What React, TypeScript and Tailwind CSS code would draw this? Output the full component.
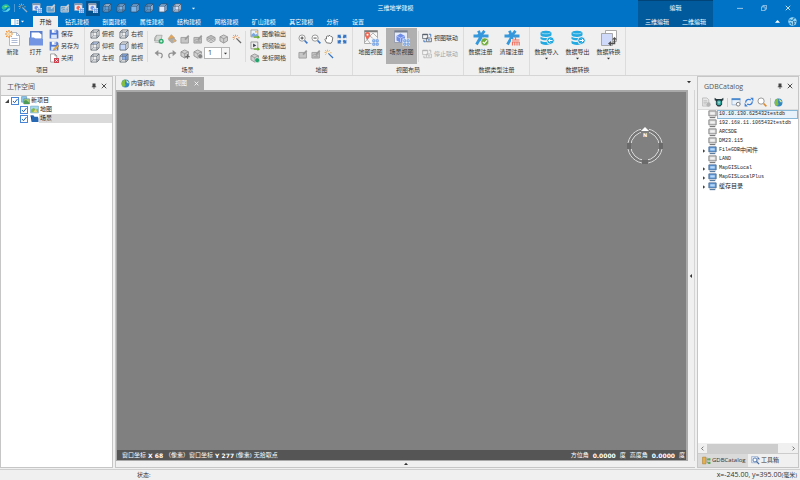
import type { ReactNode } from 'react'

type IconProps = { className?: string }

// 16x16 drawing area shared by all the icons
function Svg({ className = 'size-[10px]', children }: IconProps & { children: ReactNode }) {
    return (
        <svg viewBox="0 0 16 16" className={`shrink-0 ${className}`} fill="none" aria-hidden="true">
            {children}
        </svg>
    )
}

type Face = 'none' | 'front' | 'top' | 'side' | 'all' | 'back'

type CubeProps = IconProps & { face?: Face; stroke?: string; fill?: string; base?: string }

function Cube({ face = 'none', stroke = '#5d6670', fill = '#8ab0ee', base = 'none', className }: CubeProps) {
    return (
        <Svg className={className}>
            <path d="M1.5 5 5 1.5h9.5V11L11 14.5H1.5z" fill={base} />
            {face === 'all' && <path d="M1.5 5 5 1.5h9.5V11L11 14.5H1.5z" fill={fill} />}
            {face === 'front' && <path d="M1.5 5H11v9.5H1.5z" fill={fill} />}
            {face === 'top' && <path d="M1.5 5 5 1.5h9.5L11 5z" fill={fill} />}
            {face === 'side' && <path d="M11 5l3.5-3.5V11L11 14.5z" fill={fill} />}
            {face === 'back' && <path d="M5 1.5h9.5V11H5z" fill={fill} />}
            <path d="M1.5 5H11v9.5H1.5zM1.5 5 5 1.5h9.5L11 5M14.5 1.5V11L11 14.5" stroke={stroke} strokeWidth="1.3" />
            {face !== 'front' && face !== 'all' && <path d="M5 1.5V11h9.5M5 11l-3.5 3.5" stroke={stroke} strokeWidth="0.8" />}
        </Svg>
    )
}

function Wand({ className, gray = '#6a6a6a', spark = '#f08a3c' }: IconProps & { gray?: string; spark?: string }) {
    return (
        <Svg className={className}>
            <path d="M7 7l7.5 7.5" stroke={gray} strokeWidth="2" />
            <path d="M5.5 1v3M1 5.5h3M2 2l2 2M9 2 7.5 4M2 9l2-1.5M10 6h2" stroke={spark} strokeWidth="1.5" />
        </Svg>
    )
}

function SceneIcon({ className, badge = '#6f94ee' }: IconProps & { badge?: string }) {
    return (
        <Svg className={className}>
            <path d="M1 1h12v11H1z" fill="#eef2fb" stroke="#9aa3b5" />
            <path d="M1 1h12v2.5H1z" fill="#8d97ac" />
            <path d="M4 6l3-1.5L10 6v3.5L7 11 4 9.5z" fill={badge} />
            <path d="M8 8h8v8H8z" fill="#e8f0fb" />
            <path d="M9.5 9.5h2v2h-2zM13 9.5h2v2h-2zM9.5 13h2v2h-2zM13 13h2v2h-2z" stroke="#3f7fd6" />
        </Svg>
    )
}

function EditIcon({ className, color = '#9b9b9b', chart = false }: IconProps & { color?: string; chart?: boolean }) {
    return (
        <Svg className={className}>
            <path d="M1.5 5.5h12v9h-12z" fill={color} fillOpacity="0.5" stroke={color} strokeWidth="1.4" />
            {chart && <path d="M2 11l4-3 3 3 4-4M4 12.500h8" stroke={color} strokeWidth="1.4" />}
            <path d="M7 8l6-6.5 2 2L9 10z" fill={color} />
        </Svg>
    )
}

function ThreeDCube({ plus, ball, className }: IconProps & { plus?: boolean; ball?: string }) {
    return (
        <Svg className={className}>
            <path d="M7.5 1.5l6 3V11l-6 3.5-6-3.5V4.5z" fill="#d0d0d0" stroke="#8d8d8d" strokeWidth="1.3" />
            <path d="M1.5 4.5l6 3 6-3M7.5 7.5v7" stroke="#8d8d8d" strokeWidth="1.2" />
            {plus && <path d="M12 8.5v7M8.5 12h7" stroke="#6b6b6b" strokeWidth="2" />}
            {ball && <circle cx="11.5" cy="11.5" r="4" fill={ball} stroke="#f0f0f0" />}
        </Svg>
    )
}

function LayerIcon() {
    return (
        <Svg>
            <path d="M8 2l6.5 3.5L8 9 1.5 5.5z" fill="#b8b8b8" stroke="#888" />
            <path d="M1.5 5.5v5L8 14l6.5-3.5v-5M1.5 8 8 11.5 14.5 8" stroke="#929292" strokeWidth="1.3" />
        </Svg>
    )
}

function AddLayer() {
    return (
        <Svg>
            <path d="M4 2h9l-2 9H1z" fill="#d5d7d5" stroke="#929592" />
            <path d="M1 11V6l3-4M1 13l9 1" stroke="#929592" />
            <circle cx="11.5" cy="11.5" r="4" fill="#25a866" />
            <path d="M11.5 9.5v4M9.5 11.5h4" stroke="#fff" strokeWidth="1.2" />
        </Svg>
    )
}

function BucketIcon() {
    return (
        <Svg>
            <path d="M7 1l5 5-5 4-5-3z" fill="#e3a556" stroke="#bb9a70" />
            <path d="M2 9l9-3 4 5-7 3.5z" fill="#b0aca6" stroke="#a09c96" />
            <path d="M10 8l4 3-4 2z" fill="#e8ae66" />
        </Svg>
    )
}

function UndoIcon({ flip }: { flip?: boolean }) {
    return (
        <Svg className={flip ? 'size-[10px] -scale-x-100' : 'size-[10px]'}>
            <path d="M3 6.5h6c5 0 5.5 5 2 8" stroke="#929292" strokeWidth="2" />
            <path d="M7 1.5v10l-6-5z" fill="#929292" />
        </Svg>
    )
}

function NewIcon({ className }: IconProps) {
    return (
        <Svg className={className}>
            <path d="M4.500 2.500h7l3 3v10h-10z" fill="#fff" stroke="#a9a9a9" strokeWidth="0.8" />
            <path d="M11.5 2.5v3h3M6.5 8.5h6M6.5 10.5h6M6.5 12.500h6" stroke="#9aabc8" strokeWidth="0.8" />
            <circle cx="4" cy="4" r="1.6" fill="#ffd58f" />
            <path d="M4 0v2M4 6v2M0 4h2M6 4h2M1.2 1.2l1.3 1.3M5.5 5.500l1.3 1.3M6.8 1.2 5.5 2.5M1.2 6.8l1.3-1.3" stroke="#f08a28" strokeWidth="1.1" />
        </Svg>
    )
}

function OpenIcon({ className }: IconProps) {
    return (
        <Svg className={className}>
            <path d="M2 1h12.5v8H2z" fill="#5b7ecb" />
            <path d="M3.500 2.500h7.500l2.500 2v4h-10z" fill="#fff" />
            <path d="M1 7.500h5L7.500 9H15v6.500H1z" fill="#7294e2" />
        </Svg>
    )
}

function SaveIcon({ pen }: { pen?: boolean }) {
    return (
        <Svg>
            <path d="M1 1h12l2 2v12H1z" fill="#5279d3" />
            <path d="M4.5 1h7v5h-7z" fill="#fff" />
            <path d="M9 2h1.5v3H9z" fill="#5279d3" />
            <path d="M3.5 9h9v6h-9z" fill="#dce6fb" />
            {pen && <path d="M7 15l1-3 6-6 2 2-6 6z" fill="#e5ac4c" stroke="#9a7331" strokeWidth="0.6" />}
        </Svg>
    )
}

function CloseDocIcon() {
    return (
        <Svg>
            <path d="M2.5 1.5h7l3 3v10h-10z" fill="#fff" stroke="#777" />
            <path d="M9.5 1.5v3h3" stroke="#777" />
            <path d="M8 8h8v8H8z" fill="#cf4350" />
            <path d="M10 10l4 4M14 10l-4 4" stroke="#fff" strokeWidth="1.3" />
        </Svg>
    )
}

function ExportIcon({ video }: { video?: boolean }) {
    return (
        <Svg>
            <path d="M1.5 1.5h11v11h-11z" fill={video ? '#eee' : '#eaf2fb'} stroke="#777" />
            {video ? <path d="M5 4l5 3-5 3z" fill="#3b4450" /> : <path d="M2 12V9l4-3 3 3 3-2v5z" fill="#7ca7dd" />}
            {!video && <circle cx="9.5" cy="4.5" r="1.5" fill="#efac3c" />}
            <path d="M6 12h6V9.500l4 3.500-4 3v-2H6z" fill="#66ad27" />
        </Svg>
    )
}

function ZoomIcon({ minus, orange }: { minus?: boolean; orange?: boolean }) {
    return (
        <Svg>
            <circle cx="6.5" cy="6.5" r="5" fill="#fff" stroke="#858585" strokeWidth="1.3" />
            <path d="M10.5 10.5 15 15" stroke={orange ? '#dc8a31' : '#3975c8'} strokeWidth="2.5" />
            {!orange && <path d="M4 6.5h5" stroke="#333" strokeWidth="1.4" />}
            {!minus && !orange && <path d="M6.5 4v5" stroke="#333" strokeWidth="1.4" />}
        </Svg>
    )
}

function PanIcon() {
    return (
        <Svg>
            <path d="M4 14L1.500 9l1-1.500L4 8V4l2-1 1 1 1-2 2 1 1 1 2 .5 1 1.500-1 6-2 3z" fill="#fff" stroke="#666" strokeWidth="1.4" strokeLinejoin="round" />
        </Svg>
    )
}

function FitIcon() {
    return (
        <Svg>
            <path
                d="M1 1h6L5.500 2.500 7 5 5 7 2.500 5.500 1 7zM15 1v6l-1.500-1.500L11 7 9 5l1.500-2.500L9 1zM1 15V9l1.500 1.500L5 9l2 2-1.500 2.500L7 15zM15 15H9l1.500-1.500L9 11l2-2 2.500 1.500L15 9z"
                fill="#3775c5"
            />
        </Svg>
    )
}

// Four small linked tiles in the lower right corner of the view icons
function Tiles() {
    return (
        <>
            <path d="M8.500 8.500H16V16H8.500z" fill="#e6ecf7" />
            <path d="M9.800 9.800h2v2h-2zM13.200 9.800h2v2h-2zM9.800 13.200h2v2h-2zM13.200 13.200h2v2h-2z" stroke="#5d94df" strokeWidth="0.900" />
        </>
    )
}

function MapViewIcon({ className }: IconProps) {
    return (
        <Svg className={className}>
            <path d="M1.5.5h13v13h-13z" fill="#f7f7f7" stroke="#9a9a9a" strokeWidth="0.8" />
            <path d="M1.5.5h13v1.8h-13z" fill="#7c7c7c" />
            <path d="M2 12l5-6 7 6M7 6l3-3 4 4M3 8l4 5" stroke="#a4a4a4" strokeWidth="0.8" />
            <path d="M4.5 10C2.500 7 1.800 6 1.800 4.800a2.700 2.700 0 0 1 5.400 0C7.200 6 6.500 7 4.500 10z" fill="#ee6956" />
            <circle cx="4.5" cy="4.8" r="1" fill="#fff" />
            <Tiles />
        </Svg>
    )
}

function SceneViewIcon({ className }: IconProps) {
    return (
        <Svg className={className}>
            <path d="M.5.5h13v12H.5z" fill="#e5ebfa" stroke="#8e94a4" strokeWidth="0.8" />
            <path d="M.5.5h13v2H.5z" fill="#777e8c" />
            <path d="M6.5 3.5 11 6v4.5l-4.5 2-4-2V6z" fill="#6f8de6" />
            <path d="M2.5 6l4 2L11 6M6.5 8v4" stroke="#c5d3fa" strokeWidth="0.7" />
            <Tiles />
        </Svg>
    )
}

function LinkViewIcon({ off }: { off?: boolean }) {
    const frame = off ? '#b5b5b5' : '#59616c'
    const arrow = off ? '#b5b5b5' : '#3775c5'
    return (
        <Svg>
            <path d="M1 2h8v7H1zM7 8h8v6H7z" fill="#f4f4f4" stroke={frame} strokeWidth="1.3" />
            <path d="M1 2.5h8" stroke={frame} strokeWidth="2" />
            <path d="M11 2h3v4M3 11v3h3" stroke={arrow} strokeWidth="1.5" />
            <path d="M9 11h4M11 9.5v3" stroke={arrow} />
        </Svg>
    )
}

function RegisterIcon({ clean, className }: IconProps & { clean?: boolean }) {
    return (
        <Svg className={className}>
            <path d="M5.5.8l2 5 4-5M.5 6h15M8 6.5l-4.500 8M5 4l5.500 9" stroke="#3598dc" strokeWidth="2.8" />
            {clean ? (
                <>
                    <path d="M7 9h9v7H7z" fill="#f0f0f0" />
                    <path d="M11.5 6.5v3M8 10h7.5M8.500 12v3.500M10.800 12v3.500M13 12v3.500M15.200 12v3.500M8 12h7.500" stroke="#f0705f" strokeWidth="1.2" />
                </>
            ) : (
                <>
                    <circle cx="11.8" cy="11.8" r="3.9" fill="#6fac3c" stroke="#f0f0f0" strokeWidth="0.6" />
                    <path d="M9.8 11.8l1.500 1.600 2.700-3" stroke="#fff" strokeWidth="1.2" />
                </>
            )}
        </Svg>
    )
}

function DatabaseIcon({ out, className }: IconProps & { out?: boolean }) {
    return (
        <Svg className={className}>
            <path d="M1.5 3c0-3 11-3 11 0v2c0 2.500-11 2.500-11 0z" fill="#24a9e0" />
            <path d="M1.5 6.800c2 1.700 9 1.700 11 0V9c-2 1.800-9 1.800-11 0zM1.500 10.800c2 1.700 9 1.700 11 0v2c0 2.800-11 2.800-11 0z" fill="#24a9e0" />
            <path d="M2.5 2.8c1 1.300 8 1.300 9 0" stroke="#bde8f8" strokeWidth="0.7" />
            <circle cx="11.5" cy="10.5" r="3.8" fill="#24a9e0" stroke="#f0f0f0" strokeWidth="0.9" />
            <path
                d={out ? 'M9.500 10.500h3.800M11.800 8.800l1.700 1.700-1.700 1.700' : 'M13.500 10.500H9.800M11.300 8.800l-1.700 1.700 1.700 1.700'}
                stroke="#fff"
            />
        </Svg>
    )
}

function ConvertIcon({ className }: IconProps) {
    return (
        <Svg className={className}>
            <path d="M4.5.5h11v11h-11z" fill="#fff" stroke="#a0a0a0" strokeWidth="0.9" />
            <path d="M.5 3.5h11v12H.5z" fill="#cfdafa" stroke="#a0a0a0" strokeWidth="0.9" />
            <path d="M9 13.500h4.500V9" stroke="#505050" strokeWidth="1.5" />
            <path d="M10 11v5l-3-2.500zM11 9.500h5L13.500 7z" fill="#505050" />
        </Svg>
    )
}

function GlobeIcon({ className }: IconProps) {
    return (
        <Svg className={className}>
            <circle cx="8" cy="8" r="7" fill="#3187c2" />
            <path d="M7 1.100A7 7 0 0 0 5 14.300C8 13 9 11 7.500 9S9 4 7 1.100z" fill="#83bd41" />
            <path d="M9 2c3 .5 5 3 5 5.500-2 1-4-1-5-5.500z" fill="#d1e8a3" />
        </Svg>
    )
}

function LogoIcon() {
    return (
        <Svg className="size-[10px]">
            <path d="M1 7c1-3 4-5 7-5 4 0 6 3 7 6-2-2-5-2-7 1s-6 2-7-2z" fill="#28bfa0" />
            <path d="M1 11c3 2 7 2 9-1 1-2 3-2 5-1-1 3-4 5-7 5s-6-1-7-3z" fill="#59d6e9" />
            <path d="M5 5.500c2-1.500 4-1 5 0-1 1-3 2-5 0z" fill="#9fe26a" />
        </Svg>
    )
}

function ServerIcon({ active }: { active?: boolean }) {
    return (
        <Svg className="size-[9px]">
            <path d="M1.5 1.5h13v9h-13z" fill={active ? '#5c99dc' : '#d1d1d1'} stroke={active ? '#46698f' : '#777'} strokeWidth="1.4" />
            <path d="M4 4h8v4H4z" fill={active ? '#b7d9f7' : '#f2f2f2'} />
            <path d="M3 13.500h10" stroke={active ? '#56799d' : '#777'} strokeWidth="2" />
        </Svg>
    )
}

function PinIcon() {
    return (
        <Svg className="size-[6px]">
            <path d="M4 1h8v8H4zM2 9h12v2H2zM7 11h2v5H7z" fill="#444" />
        </Svg>
    )
}

function CrossIcon({ className = 'size-[6px]', stroke = '#444' }: IconProps & { stroke?: string }) {
    return (
        <Svg className={className}>
            <path d="M2 2l12 12M14 2L2 14" stroke={stroke} strokeWidth="2.5" />
        </Svg>
    )
}

function Caret({ className = 'size-[4px]', up, fill = '#333' }: IconProps & { up?: boolean; fill?: string }) {
    return (
        <Svg className={className}>
            <path d={up ? 'M0 12 8 3l8 9z' : 'M0 4h16l-8 9z'} fill={fill} />
        </Svg>
    )
}

const TABS = ['钻孔建模', '剖面建模', '属性建模', '结构建模', '网格建模', '矿山建模', '其它建模', '分析', '设置']

const QUICK_ACTIONS = [
    { label: '魔棒', icon: <Wand gray="#9fb0c0" spark="#d1a877" /> },
    { label: '新建场景', icon: <SceneIcon /> },
    { label: '编辑', icon: <EditIcon color="#c9ced2" /> },
    { label: '编辑图层', icon: <EditIcon color="#c9ced2" chart /> },
    { label: '地图视图', icon: <SceneIcon badge="#ee6956" /> },
    { label: '场景视图', icon: <SceneIcon />, active: true },
    { label: '俯视', icon: <Cube face="top" stroke="#34506e" fill="#b9d4ee" base="#5f9fd6" /> },
    { label: '仰视', icon: <Cube face="back" stroke="#34506e" fill="#7fb6e6" base="#5f9fd6" /> },
    { label: '左视', icon: <Cube face="all" stroke="#34506e" fill="#7db4e8" /> },
    { label: '右视', icon: <Cube face="side" stroke="#34506e" fill="#c2dcfa" base="#5f9fd6" /> },
    { label: '前视', icon: <Cube face="front" stroke="#34506e" fill="#dfe9fb" base="#8fbde8" /> },
    { label: '后视', icon: <Cube face="back" stroke="#4d5868" fill="#d5e4fa" base="#a8c8ea" /> },
]

const DATABASES = [
    { latin: '10.10.130.625432testdb', selected: true },
    { latin: '192.168.11.1065432testdb' },
    { latin: 'ARCSDE' },
    { latin: 'DM23.115' },
    { latin: 'FileGDB', cjk: '中间件', active: true },
    { latin: 'LAND' },
    { latin: 'MapGISLocal', active: true },
    { latin: 'MapGISLocalPlus', active: true },
    { latin: '', cjk: '缓存目录', active: true },
]

function RibbonGroup({ title, className, children }: { title: string; className: string; children: ReactNode }) {
    return (
        <section className={`flex shrink-0 flex-col border-r border-[#dcdcdc] pt-px ${className}`}>
            <div className="flex h-9">{children}</div>
            <h2 className="h-[11px] text-center leading-[13px]">{title}</h2>
        </section>
    )
}

function BigButton({ icon, label, className, menu }: { icon: ReactNode; label: string; className: string; menu?: boolean }) {
    return (
        <button className={`flex shrink-0 flex-col items-center pt-0.5 ${className}`}>
            {icon}
            <span className="mt-0.5 h-2 leading-[8px]">{label}</span>
            {menu && <Caret className="mt-px size-[3px]" />}
        </button>
    )
}

function SmallButton({ icon, label, disabled }: { icon: ReactNode; label: string; disabled?: boolean }) {
    return (
        <button disabled={disabled} className="flex h-3 items-center gap-[2px] disabled:text-[#a5a5a5]">
            {icon}
            {label}
        </button>
    )
}

function IconButton({ icon, label }: { icon: ReactNode; label: string }) {
    return (
        <button aria-label={label} className="flex h-[15px] w-[13px] items-center justify-center">
            {icon}
        </button>
    )
}

function Divider() {
    return <div className="mt-[3px] h-[31px] w-px shrink-0 bg-[#dcdcdc]" />
}

function Header() {
    return (
        <header className="flex h-[27px] shrink-0 bg-[#0173c7] text-white">
            <div className="flex min-w-0 flex-1 flex-col">
                <div className="flex h-4 items-center">
                    <div className="flex w-[200px] shrink-0 items-center pl-px">
                        <LogoIcon />
                        <span className="mr-px ml-[3px] h-2 w-px bg-[#4b9bd6]" />
                        {QUICK_ACTIONS.map((a) => (
                            <button
                                key={a.label}
                                aria-label={a.label}
                                className={`flex h-[15px] w-[14px] items-center justify-center ${a.active ? 'bg-[#015291]' : ''}`}
                            >
                                {a.icon}
                            </button>
                        ))}
                        <button aria-label="自定义" className="ml-2">
                            <Caret className="size-[3px]" fill="#fff" />
                        </button>
                    </div>
                    <h1 className="flex-1 pr-[47px] text-center">三维地学建模</h1>
                </div>
                <nav className="flex h-[11px]">
                    <button aria-label="菜单" className="flex w-[33px] items-center justify-center gap-[2px] pl-px">
                        <Svg className="size-[8px]">
                            <path d="M0 2h16v12H0z" fill="#fff" />
                            <path d="M8 2v12M11 5h4M11 8h4M11 11h4" stroke="#0173c7" />
                        </Svg>
                        <Caret className="size-[3px]" fill="#fff" />
                    </button>
                    <button className="w-[25px] bg-[#f0f0f0] leading-[12px] text-[#222]">开始</button>
                    <div className="ml-[7px] flex w-[299px] justify-between">
                        {TABS.map((t) => (
                            <button key={t} className="leading-[12px] whitespace-nowrap">
                                {t}
                            </button>
                        ))}
                    </div>
                </nav>
            </div>
            <div className="flex w-[75px] shrink-0 flex-col bg-[#015a9c]">
                <div className="h-4 border-t border-[#014578] text-center leading-[14px]">编辑</div>
                <div className="flex h-[11px] justify-between px-[7px]">
                    <button className="leading-[12px]">三维编辑</button>
                    <button className="leading-[12px]">二维编辑</button>
                </div>
            </div>
            <div className="w-[87px] shrink-0">
                <div className="flex h-4 items-center justify-end">
                    <button aria-label="最小化" className="flex w-6 justify-center">
                        <Svg className="size-[6px]">
                            <path d="M0 9h16" stroke="#cfe3f4" strokeWidth="2" />
                        </Svg>
                    </button>
                    <button aria-label="还原" className="flex w-6 justify-center">
                        <Svg className="size-[6px]">
                            <path d="M1 5h10v10H1zM5 5V1h10v10h-4" stroke="#cfe3f4" strokeWidth="1.8" />
                        </Svg>
                    </button>
                    <button aria-label="关闭窗口" className="flex w-6 justify-center">
                        <CrossIcon className="size-[6px]" stroke="#cfe3f4" />
                    </button>
                </div>
                <div className="flex h-[11px] items-center justify-end gap-2 pr-[3px]">
                    <button aria-label="折叠功能区">
                        <Caret className="size-[5px]" up fill="#fff" />
                    </button>
                    <button aria-label="帮助">
                        <Svg className="size-[9px]">
                            <circle cx="8" cy="8" r="7.5" fill="#9bd7f5" />
                            <path d="M2 6c3-3 4 2 6 0s1-4 4-4M3 12c1-3 3-2 4 2" stroke="#197fbd" strokeWidth="2" />
                            <path d="M9 7h6v8H9z" fill="#1b79b5" />
                            <path d="M11 9h2v4h-2" stroke="#fff" strokeWidth="1.3" />
                        </Svg>
                    </button>
                </div>
            </div>
        </header>
    )
}

function Ribbon() {
    return (
        <div className="flex h-12 shrink-0 overflow-hidden bg-[#f0f0f0]">
            <RibbonGroup title="项目" className="w-[85px]">
                <BigButton icon={<NewIcon className="size-[16px]" />} label="新建" className="ml-px w-[23px]" />
                <BigButton icon={<OpenIcon className="size-[16px]" />} label="打开" className="w-[23px]" />
                <div className="ml-[2px] flex flex-col">
                    <SmallButton icon={<SaveIcon />} label="保存" />
                    <SmallButton icon={<SaveIcon pen />} label="另存为" />
                    <SmallButton icon={<CloseDocIcon />} label="关闭" />
                </div>
            </RibbonGroup>

            <RibbonGroup title="场景" className="w-[206px]">
                <div className="flex w-[62px] gap-[5px] pl-[5px]">
                    <div className="flex flex-col">
                        <SmallButton icon={<Cube />} label="俯视" />
                        <SmallButton icon={<Cube face="top" fill="#c5d7fb" />} label="仰视" />
                        <SmallButton icon={<Cube />} label="左视" />
                    </div>
                    <div className="flex flex-col">
                        <SmallButton icon={<Cube face="side" fill="#d4e2fb" />} label="右视" />
                        <SmallButton icon={<Cube face="front" fill="#c5d7fb" />} label="前视" />
                        <SmallButton icon={<Cube face="back" />} label="后视" />
                    </div>
                </div>
                <Divider />
                <div className="ml-1 w-[93px] pt-[3px]">
                    <div className="flex">
                        <IconButton icon={<AddLayer />} label="添加图层" />
                        <IconButton icon={<BucketIcon />} label="填充" />
                        <IconButton icon={<EditIcon />} label="编辑" />
                        <IconButton icon={<EditIcon chart />} label="编辑图层" />
                        <IconButton icon={<LayerIcon />} label="图层" />
                        <IconButton icon={<ThreeDCube />} label="立方体" />
                        <IconButton icon={<Wand />} label="魔棒" />
                    </div>
                    <div className="flex">
                        <IconButton icon={<UndoIcon />} label="撤销" />
                        <IconButton icon={<UndoIcon flip />} label="重做" />
                        <IconButton icon={<ThreeDCube plus />} label="添加体" />
                        <IconButton icon={<ThreeDCube ball="#858585" />} label="选择体" />
                        <div className="relative mt-px h-[12px] w-[26px]">
                            <select
                                aria-label="比例"
                                className="block size-full appearance-none border border-[#b5b5b5] bg-white pl-[3px] text-[7px] leading-[10px]"
                            >
                                <option>1</option>
                            </select>
                            <span className="pointer-events-none absolute inset-y-0 right-0 flex w-[9px] items-center justify-center border border-[#b5b5b5] bg-[#f5f5f5]">
                                <Caret className="size-[3px]" />
                            </span>
                        </div>
                    </div>
                </div>
                <Divider />
                <div className="ml-1 flex flex-col">
                    <SmallButton icon={<ExportIcon />} label="图像输出" />
                    <SmallButton icon={<ExportIcon video />} label="视频输出" />
                    <SmallButton icon={<ThreeDCube ball="#23a36b" />} label="坐标网格" />
                </div>
            </RibbonGroup>

            <RibbonGroup title="地图" className="w-[62px]">
                <div className="ml-[5px] pt-[3px]">
                    <div className="flex">
                        <IconButton icon={<ZoomIcon />} label="放大" />
                        <IconButton icon={<ZoomIcon minus />} label="缩小" />
                        <IconButton icon={<PanIcon />} label="平移" />
                        <IconButton icon={<FitIcon />} label="全图" />
                    </div>
                    <div className="flex">
                        <IconButton icon={<EditIcon />} label="编辑地图" />
                        <IconButton icon={<EditIcon chart />} label="编辑样式" />
                        <IconButton icon={<Wand gray="#3775c5" spark="#e9aa48" />} label="地图魔棒" />
                    </div>
                </div>
            </RibbonGroup>

            <RibbonGroup title="视图布局" className="w-[111px]">
                <BigButton icon={<MapViewIcon className="size-[16px]" />} label="地图视图" className="ml-[2px] w-[31px]" />
                <BigButton icon={<SceneViewIcon className="size-[16px]" />} label="场景视图" className="w-[31px] bg-[#b0b0b0]" />
                <div className="ml-px flex">
                    <Divider />
                </div>
                <div className="ml-[3px] flex flex-col gap-1 pt-1">
                    <SmallButton icon={<LinkViewIcon />} label="视图联动" />
                    <SmallButton icon={<LinkViewIcon off />} label="停止联动" disabled />
                </div>
            </RibbonGroup>

            <RibbonGroup title="数据类型注册" className="w-[66px]">
                <BigButton icon={<RegisterIcon className="size-[16px]" />} label="数据注册" className="ml-px w-[31px]" />
                <BigButton icon={<RegisterIcon clean className="size-[16px]" />} label="清理注册" className="w-[31px]" />
            </RibbonGroup>

            <RibbonGroup title="数据转换" className="w-[96px]">
                <BigButton icon={<DatabaseIcon className="size-[16px]" />} label="数据导入" className="ml-px w-[31px]" menu />
                <BigButton icon={<DatabaseIcon out className="size-[16px]" />} label="数据导出" className="w-[31px]" menu />
                <BigButton icon={<ConvertIcon className="size-[16px]" />} label="数据转换" className="w-[31px]" menu />
            </RibbonGroup>
        </div>
    )
}

function PanelTitle({ title }: { title: string }) {
    return (
        <div className="flex h-[18px] shrink-0 items-center gap-1 bg-[#f0f0f0] pr-[5px] pl-[6px]">
            <h2 className="flex-1 text-[7px] text-[#555]">{title}</h2>
            <button aria-label="固定">
                <PinIcon />
            </button>
            <button aria-label="关闭面板">
                <CrossIcon />
            </button>
        </div>
    )
}

function TreeCheckbox({ label, icon, selected }: { label: string; icon: ReactNode; selected?: boolean }) {
    return (
        <label className="flex h-full flex-1 items-center">
            <span className="mr-[2px] grid size-[8px] place-items-center">
                <input type="checkbox" defaultChecked className="peer col-start-1 row-start-1 size-[8px] appearance-none border border-[#4a86d6] bg-white" />
                <Svg className="pointer-events-none invisible col-start-1 row-start-1 size-[8px] peer-checked:visible">
                    <path d="M4 8l3 3.5L13 4" stroke="#2563b8" strokeWidth="2" />
                </Svg>
            </span>
            {icon}
            <span className={`flex-1 pl-px ${selected ? 'bg-[#dadada]' : ''}`}>{label}</span>
        </label>
    )
}

function Workspace() {
    return (
        <aside className="flex w-[113px] shrink-0 flex-col border border-[#c6c6c6]">
            <PanelTitle title="工作空间" />
            <ul className="flex-1 border-t border-[#c6c6c6] bg-white text-[#222]">
                <li className="flex h-[9px] items-center gap-[2px] pl-1">
                    <Svg className="size-[4px]">
                        <path d="M16 0v16H0z" fill="#444" />
                    </Svg>
                    <TreeCheckbox
                        label="新项目"
                        icon={
                            <Svg className="size-[9px]">
                                <path d="M1 1h9v10H1z" fill="#8cc6ea" stroke="#4f87b4" />
                                <path d="M5 5h10v9H5z" fill="#a9cf73" stroke="#4d7eb0" />
                                <path d="M5 9l4-2 6 5v2H5z" fill="#4d9b55" />
                            </Svg>
                        }
                    />
                </li>
                <li className="flex h-[9px] items-center pl-[19px]">
                    <TreeCheckbox
                        label="地图"
                        icon={
                            <Svg className="size-[9px]">
                                <path d="M1 2h14v12H1z" fill="#a9d9ee" stroke="#5e9ebe" />
                                <path d="M2 13V8l5-3 3 4 4-3v7z" fill="#86b951" />
                                <path d="M7 10l4-2 2 5H6z" fill="#e9d371" />
                            </Svg>
                        }
                    />
                </li>
                <li className="flex h-[9px] items-center pl-[19px]">
                    <TreeCheckbox
                        label="场景"
                        selected
                        icon={
                            <Svg className="size-[9px]">
                                <path d="M1 2h5l2 3h6l1 3v6H3z" fill="#2868b2" />
                                <path d="M1 2l2 12V6z" fill="#153f7b" />
                            </Svg>
                        }
                    />
                </li>
            </ul>
        </aside>
    )
}

function Compass() {
    return (
        <svg viewBox="0 0 38 38" className="absolute top-[35px] right-[22px] size-[38px]" fill="none" role="img" aria-label="指北针">
            <circle cx="19" cy="19" r="15.7" stroke="#777" strokeWidth="3" />
            <circle cx="19" cy="19" r="17.2" stroke="#dcdcdc" />
            <circle cx="19" cy="19" r="14.2" stroke="#dcdcdc" />
            <path d="M0 19h6M32 19h6M19 32v6" stroke="#808080" strokeWidth="6" />
            <path d="M1 17h4M1 19h4M1 21h4M33 17h4M33 19h4M33 21h4M17 33v4M19 33v4M21 33v4" stroke="#555" />
            <path d="M15 0h8v10h-8z" fill="#808080" />
            <path d="M19 0l4 4h-8z" fill="#fff" />
            <text x="19" y="10" textAnchor="middle" fill="#fff" className="font-['DejaVu_Sans',sans-serif] text-[5px] font-bold">
                N
            </text>
        </svg>
    )
}

function Num({ children }: { children: ReactNode }) {
    return <b className="font-['DejaVu_Sans',sans-serif]">{children}</b>
}

function SceneView() {
    return (
        <main className="ml-0.5 flex min-w-0 flex-1 flex-col border-b border-l border-[#c6c6c6]">
            <div className="flex h-[14px] shrink-0 items-end pr-1">
                <button className="flex h-[13px] w-[54px] items-center gap-px pl-[5px]">
                    <GlobeIcon className="size-[9px]" />
                    内容视窗
                </button>
                <div className="flex h-[13px] w-[34px] items-center justify-between bg-[#a9a9a9] px-[5px] text-white">
                    <button>视图</button>
                    <button aria-label="关闭视图">
                        <CrossIcon className="size-[5px]" stroke="#fff" />
                    </button>
                </div>
                <button aria-label="视图列表" className="mb-1.5 ml-auto">
                    <Caret />
                </button>
            </div>
            <div className="flex min-h-0 flex-1">
                <div className="flex min-w-0 flex-1 flex-col border border-t-2 border-r-2 border-[#a9a9a9] bg-[#808080]">
                    <div className="relative flex-1">
                        <Compass />
                    </div>
                    <div className="flex h-[10px] shrink-0 items-center justify-between bg-[#555] pr-px pl-[5px] whitespace-nowrap text-white">
                        <div className="flex gap-[2px]">
                            <span>窗口坐标</span>
                            <Num>X 68</Num>
                            <span>（像素）窗口坐标</span>
                            <Num>Y 277</Num>
                            <span>(像素)</span>
                            <span>无拾取点</span>
                        </div>
                        <div className="flex gap-1">
                            <span>方位角</span>
                            <Num>0.0000</Num>
                            <span>度</span>
                            <span>高度角</span>
                            <Num>0.0000</Num>
                            <span>度</span>
                        </div>
                    </div>
                </div>
                <button aria-label="展开右侧" className="flex w-[7px] shrink-0 items-center justify-center border-r border-[#d5d5d5]">
                    <Svg className="size-[4px]">
                        <path d="M12 0v16L3 8z" fill="#333" />
                    </Svg>
                </button>
            </div>
            <button aria-label="展开底部" className="flex h-[6px] shrink-0 items-center justify-center">
                <Caret up />
            </button>
        </main>
    )
}

function Catalog() {
    return (
        <aside className="ml-0.5 flex w-[102px] shrink-0 flex-col border border-[#c6c6c6]">
            <PanelTitle title="GDBCatalog" />
            <div className="flex h-[15px] shrink-0 items-center gap-[3px] border-b border-[#dcdcdc] pl-[3px]">
                <button aria-label="添加数据源">
                    <Svg>
                        <path d="M2.5 1.5h7l3 3v10h-10z" fill="#e8e8e8" stroke="#aaa" />
                        <path d="M4 6h6M4 8.5h6M4 11h4" stroke="#aaa" />
                        <circle cx="12" cy="12" r="3.5" fill="#b5b5b5" />
                    </Svg>
                </button>
                <button aria-label="附加数据库">
                    <Svg>
                        <path d="M1 1l3 2h8l3-2v4l-2 1v6l-3 3H6l-3-3V6L1 5z" fill="#25383d" />
                        <circle cx="8" cy="9" r="4" fill="#25a39b" />
                        <path d="M6 8h4M8 8v4" stroke="#fff" />
                    </Svg>
                </button>
                <span className="h-[9px] w-px bg-[#ccc]" />
                <button aria-label="属性窗口">
                    <Svg>
                        <path d="M1.5 2.5h13v10h-13z" fill="#eaf3fc" stroke="#87a7cc" />
                        <path d="M1 2h14v3H1z" fill="#4c8bd0" />
                        <circle cx="11.5" cy="11.5" r="3" fill="#fff" stroke="#777" strokeWidth="1.5" />
                    </Svg>
                </button>
                <button aria-label="刷新">
                    <Svg>
                        <path d="M2.5 9C3 4 7 3 11 4.5M13.5 7c-.5 5-4.500 6-8.500 4.500" stroke="#3d81d8" strokeWidth="2" />
                        <path d="M10 1h5v6zM6 15H1V9z" fill="#3d81d8" />
                    </Svg>
                </button>
                <button aria-label="搜索">
                    <ZoomIcon orange />
                </button>
                <span className="h-[9px] w-px bg-[#ccc]" />
                <button aria-label="全球">
                    <GlobeIcon className="size-[9px]" />
                </button>
            </div>
            <ul className="min-h-0 flex-1 overflow-hidden bg-white text-[#222]">
                {DATABASES.map((d) => (
                    <li key={d.latin + d.cjk} className="flex h-[9px] items-center pl-1">
                        <span className="flex w-[6px] shrink-0">
                            {d.active && (
                                <Svg className="size-[4px]">
                                    <path d="M4 1v14l9-7z" fill="#444" />
                                </Svg>
                            )}
                        </span>
                        <ServerIcon active={d.active} />
                        <span
                            className={`flex h-[9px] flex-1 items-center border pl-px whitespace-nowrap ${d.selected ? 'border-[#88b8d8] bg-[#e7f2fa]' : 'border-transparent'}`}
                        >
                            <span className="font-['Liberation_Mono',monospace] text-[5px]">{d.latin}</span>
                            {d.cjk}
                        </span>
                    </li>
                ))}
            </ul>
            <div className="flex h-[10px] shrink-0 items-center bg-[#f0f0f0]">
                <button aria-label="向左滚动" className="flex w-[9px] justify-center">
                    <Svg className="size-[5px]">
                        <path d="M11 2L5 8l6 6" stroke="#555" strokeWidth="2.5" />
                    </Svg>
                </button>
                <div className="h-[9px] flex-1">
                    <div className="h-full w-[86%] bg-[#cdcdcd]" />
                </div>
                <button aria-label="向右滚动" className="flex w-[9px] justify-center">
                    <Svg className="size-[5px]">
                        <path d="M5 2l6 6-6 6" stroke="#555" strokeWidth="2.5" />
                    </Svg>
                </button>
            </div>
            <div className="flex h-[14px] shrink-0 border-t border-[#ccc]">
                <button className="flex w-[50px] items-center gap-px bg-[#dadada] pl-1">
                    <Svg className="size-[9px]">
                        <path d="M1 2h6v12H1z" fill="#e8b04a" stroke="#a67b2c" />
                        <path d="M9 3v9h3M9 6h3" stroke="#666" />
                        <path d="M11 4h4v4h-4zM11 10h4v4h-4z" fill="#5aa552" />
                    </Svg>
                    GDBCatalog
                </button>
                <button className="flex items-center gap-px pl-[3px]">
                    <Svg className="size-[9px]">
                        <path d="M1 1h11v11H1z" fill="#dfe8f5" stroke="#7e9bc4" />
                        <circle cx="7" cy="7" r="3.5" fill="#fff" stroke="#456ca3" strokeWidth="1.5" />
                        <path d="M9.5 9.5l5 5M12 3l3 3" stroke="#456ca3" strokeWidth="2" />
                    </Svg>
                    工具箱
                </button>
            </div>
        </aside>
    )
}

export default function App() {
    return (
        <div className="flex h-screen w-full flex-col overflow-hidden bg-[#f0f0f0] font-['Open_Sans','Noto_Sans_CJK_SC',sans-serif] text-[6px] leading-[9px] text-[#333]">
            <Header />
            <Ribbon />
            <div className="flex min-h-0 flex-1 border-t border-[#d5d5d5] pr-px pb-px">
                <Workspace />
                <SceneView />
                <Catalog />
            </div>
            <footer className="flex h-[11px] shrink-0 items-center justify-between border-t border-[#cfcfcf] pr-[3px] pl-[137px]">
                <span>状态:</span>
                <span>
                    <span className="text-[7px]">x=-245.00, y=395.00</span>(毫米)
                </span>
            </footer>
        </div>
    )
}
